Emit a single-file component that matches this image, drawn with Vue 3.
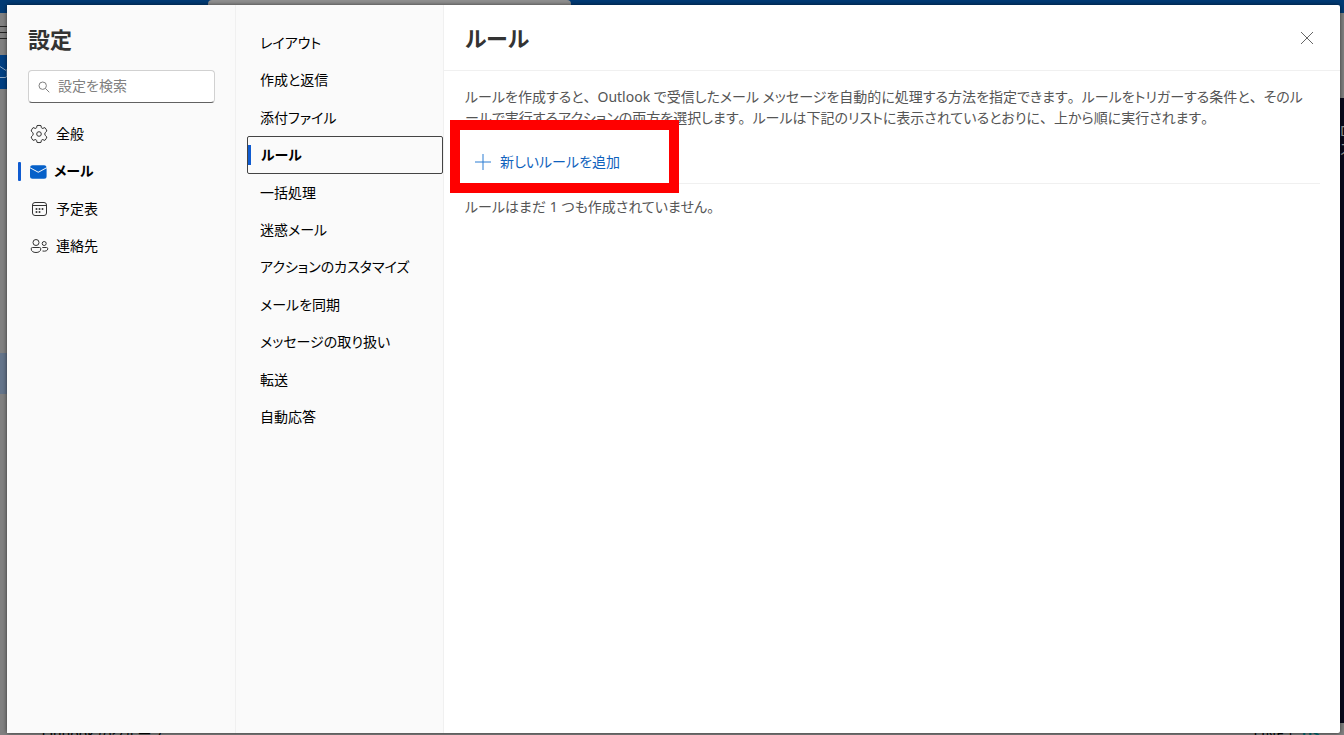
<script setup>
import { ref, computed } from 'vue'

const search = ref('')

// Catégories principales (colonne de gauche)
const categories = [
  { id: 'general', label: '全般' },
  { id: 'mail', label: 'メール' },
  { id: 'calendar', label: '予定表' },
  { id: 'people', label: '連絡先' },
]
const currentCategory = ref('mail')

// Sous-sections de la catégorie « メール »
const sections = [
  'レイアウト',
  '作成と返信',
  '添付ファイル',
  'ルール',
  '一括処理',
  '迷惑メール',
  'アクションのカスタマイズ',
  'メールを同期',
  'メッセージの取り扱い',
  '転送',
  '自動応答',
]
const currentSection = ref('ルール')

const description =
  'ルールを作成すると、Outlook で受信したメール メッセージを自動的に処理する方法を指定できます。ルールをトリガーする条件と、そのルールで実行するアクションの両方を選択します。ルールは下記のリストに表示されているとおりに、上から順に実行されます。'

// La ponctuation japonaise garde sa pleine chasse, le reste est proportionnel
const descriptionParts = computed(() =>
  description.split(/([、。])/).filter(Boolean).map((text) => ({ text, mark: /^[、。]$/.test(text) })),
)
</script>

<template>
  <div class="app">
    <!-- Boîte de réception assombrie derrière la fenêtre -->
    <div class="mailbox" aria-hidden="true">
      <div class="topbar"><div class="topbar-search"></div></div>
      <div class="mailbox-body">
        <div class="rail">
          <svg class="burger" width="7" height="13" viewBox="0 0 7 13" stroke="#222">
            <path d="M0 .5h7M0 6.500h7M0 12.500h7" />
          </svg>
          <div class="new-mail">
            <svg width="7" height="20" viewBox="0 0 7 20" fill="none" stroke="#8ba6c4">
              <path d="M0 4.500l6 4M0 15.500h5a2 2 0 0 0 2-2V7" />
            </svg>
          </div>
          <div class="rail-current"></div>
        </div>
        <div class="ad"><p>D<br />ス</p></div>
      </div>
      <div class="mailbox-foot">
        <span>Outlook のグループ</span>
        <span class="foot-ad">LINE上 <b>US</b></span>
      </div>
    </div>

    <div class="dialog" role="dialog" aria-labelledby="settings-title">
      <div class="categories">
        <h1 id="settings-title">設定</h1>
        <label class="search">
          <svg width="12" height="12" viewBox="0 0 12 12" fill="none" stroke="#808080">
            <circle cx="4.700" cy="4.700" r="3.700" />
            <path d="M7.500 7.500l3.800 3.800" />
          </svg>
          <input v-model="search" type="text" placeholder="設定を検索" aria-label="設定を検索" />
        </label>
        <nav class="category-list">
          <button
            v-for="cat in categories"
            :key="cat.id"
            type="button"
            class="category"
            :class="{ active: cat.id === currentCategory }"
            @click="currentCategory = cat.id"
          >
            <svg v-if="cat.id === 'general'" width="20" height="20" viewBox="0 0 20 20" fill="none" stroke="#333">
              <path
                d="M8 1.600Q10 1.200 12 1.600L12.400 3.600Q12.700 4.700 13.900 4.300L15.900 3.600Q17.300 5.100 17.900 7L16.400 8.400Q15 10 16.400 11.600L17.900 13Q17.300 14.900 15.900 16.400L13.900 15.700Q12.700 15.300 12.400 16.400L12 18.400Q10 18.800 8 18.400L7.600 16.400Q7.300 15.300 6.100 15.700L4.100 16.400Q2.700 14.900 2.100 13L3.600 11.600Q5 10 3.600 8.400L2.100 7Q2.700 5.100 4.100 3.600L6.100 4.300Q7.300 4.700 7.600 3.600Z"
                stroke-linejoin="round"
              />
              <circle cx="10" cy="10" r="2.300" />
            </svg>
            <svg v-else-if="cat.id === 'mail'" width="20" height="20" viewBox="0 0 20 20">
              <path
                fill="#0560c9"
                d="M2 7.300 10.300 11.800 18.600 7.300V15.200A2.500 2.500 0 0 1 16.100 17.700H4.500A2.500 2.500 0 0 1 2 15.200ZM4.500 4.200H16.100A2.500 2.500 0 0 1 18.600 6.200L10.300 10.700 2 6.200A2.500 2.500 0 0 1 4.500 4.200Z"
              />
            </svg>
            <svg v-else-if="cat.id === 'calendar'" width="20" height="20" viewBox="0 0 20 20" fill="none" stroke="#333">
              <rect x="3.500" y="3.500" width="14" height="13" rx="2.500" />
              <path d="M3.500 6.500h14" />
              <g fill="#333" stroke="none">
                <circle cx="7.500" cy="10" r="1" />
                <circle cx="10.500" cy="10" r="1" />
                <circle cx="13.500" cy="10" r="1" />
                <circle cx="7.500" cy="13" r="1" />
                <circle cx="10.500" cy="13" r="1" />
              </g>
            </svg>
            <svg v-else width="20" height="20" viewBox="0 0 20 20" fill="none" stroke="#333">
              <circle cx="7" cy="6.500" r="3" />
              <circle cx="15.200" cy="7.500" r="2" />
              <path
                d="M3.500 11.500h7a1.300 1.300 0 0 1 1.300 1.300C11.800 15.300 9.800 16.500 7 16.500S2.200 15.300 2.200 12.800A1.300 1.300 0 0 1 3.500 11.500ZM13.300 11.500h4.200a1.300 1.300 0 0 1 1.300 1.300c0 1.900-2.400 2.800-5.300 2.200"
              />
            </svg>
            <span>{{ cat.label }}</span>
          </button>
        </nav>
      </div>

      <nav class="sections">
        <div class="section-list">
          <button
            v-for="section in sections"
            :key="section"
            type="button"
            class="section"
            :class="{ active: section === currentSection }"
            @click="currentSection = section"
          >
            {{ section }}
          </button>
        </div>
      </nav>

      <main class="content">
        <header class="content-header">
          <h2>ルール</h2>
          <button type="button" class="close" aria-label="閉じる">
            <svg width="14" height="14" viewBox="0 0 14 14" fill="none" stroke="#666">
              <path d="M1 1l12 12M13 1L1 13" />
            </svg>
          </button>
        </header>
        <div class="content-body">
          <p class="description">
            <span v-for="(part, i) in descriptionParts" :key="i" :class="{ mark: part.mark }">{{ part.text }}</span>
          </p>
          <div class="toolbar">
            <button type="button" class="add-rule">
              <svg width="18" height="18" viewBox="0 0 18 18" fill="none" stroke="#2b7cd3">
                <path d="M9 1v16M1 9h16" />
              </svg>
              新しいルールを追加
            </button>
            <div class="highlight"></div>
          </div>
          <p class="empty">ルールはまだ 1 つも作成されていません。</p>
        </div>
      </main>
    </div>
  </div>
</template>

<style>
body {
  margin: 0;
  overflow: hidden;
}
</style>

<style scoped>
.app {
  position: relative;
  height: 100vh;
  overflow: hidden;
  font-family: 'Noto Sans', 'Noto Sans CJK JP', sans-serif;
  font-feature-settings: 'palt';
  font-size: 14px;
  line-height: 20px;
  color: #000;
}

h1,
h2,
p {
  margin: 0;
}

button {
  padding: 0;
  border: 0;
  background: none;
  color: inherit;
  font: inherit;
  font-feature-settings: inherit;
  text-align: left;
  cursor: pointer;
}

svg {
  display: block;
  flex: none;
}

/* Arrière-plan */
.mailbox {
  display: flex;
  flex-direction: column;
  height: 100%;
  background: #808080;
}

.topbar {
  height: 13px;
  padding-left: 208px;
  background: #003a74;
}

.topbar-search {
  width: 363px;
  height: 10px;
  border-radius: 4px;
  background: #909090;
}

.mailbox-body {
  flex: 1;
  display: flex;
  justify-content: space-between;
}

.rail {
  width: 7px;
  padding-top: 13px;
}

.new-mail {
  display: flex;
  align-items: center;
  height: 34px;
  margin-top: 16px;
  background: #003f82;
}

.rail-current {
  height: 41px;
  margin-top: 264px;
  background: #64748a;
}

.ad {
  width: 4px;
  margin-top: 85px;
  overflow: hidden;
  background: #09091c;
  color: #999;
  line-height: 18px;
}

.ad p {
  padding-top: 24px;
}

.mailbox-foot {
  display: flex;
  justify-content: space-between;
  height: 12px;
  padding: 0 24px 0 42px;
  line-height: 22px;
}

.foot-ad b {
  color: #006a70;
}

/* Fenêtre des paramètres */
.dialog {
  position: absolute;
  inset: 5px 4px 2px 7px;
  display: flex;
  border-radius: 2px;
  background: #fff;
  box-shadow: 0 0 4px rgba(0, 0, 0, 0.6);
}

.categories {
  box-sizing: border-box;
  width: 229px;
  padding: 20px 20px 0 11px;
  border-right: 1px solid #f0f0f0;
  background: #fafafa;
}

h1,
h2 {
  font-size: 22px;
  font-weight: 700;
  line-height: 28px;
  color: #333;
}

h1 {
  padding-left: 10px;
}

.search {
  box-sizing: border-box;
  display: flex;
  align-items: center;
  gap: 8px;
  height: 33px;
  margin: 17px 0 12px 10px;
  padding: 0 9px;
  border: 1px solid #d1d1d1;
  border-bottom-color: #616161;
  border-radius: 4px;
  background: #fff;
}

.search input {
  flex: 1;
  min-width: 0;
  height: 20px;
  padding: 0 0 2px;
  border: 0;
  outline: 0;
  background: none;
  font: inherit;
  color: inherit;
}

.search input::placeholder {
  color: #808080;
  opacity: 1;
}

.category-list {
  display: grid;
  grid-auto-rows: 1fr;
  height: 150px;
}

.category {
  display: flex;
  align-items: center;
  gap: 7px;
  padding-left: 11px;
}

.category.active {
  position: relative;
  gap: 6px;
  padding-left: 10px;
  font-weight: 700;
}

.category.active::before {
  content: '';
  position: absolute;
  top: 9px;
  bottom: 9px;
  left: 0;
  width: 3px;
  border-radius: 1px;
  background: #0f5bd0;
}

.sections {
  box-sizing: border-box;
  width: 208px;
  padding: 19px 0 0 11px;
  border-right: 1px solid #f0f0f0;
  background: #fafafa;
}

.section-list {
  display: grid;
  grid-auto-rows: 1fr;
  height: 412px;
}

.section {
  padding-left: 13px;
}

.section.active {
  position: relative;
  border: 1px solid #444;
  border-radius: 2px;
  font-weight: 700;
}

.section.active::before {
  content: '';
  position: absolute;
  top: 8px;
  bottom: 8px;
  left: 0;
  width: 3px;
  background: #0f5bd0;
}

.content {
  flex: 1;
  min-width: 0;
}

.content-header {
  box-sizing: border-box;
  display: flex;
  align-items: center;
  justify-content: space-between;
  height: 66px;
  padding: 0 26px 0 21px;
  border-bottom: 1px solid #f0f0f0;
}

.content-body {
  padding: 15px 20px 0 21px;
  color: #555;
}

.description {
  padding-right: 10px;
  line-height: 21px;
  line-break: anywhere;
}

.mark {
  font-feature-settings: normal;
}

.toolbar {
  position: relative;
  display: flex;
  padding: 24px 0 11px 9px;
  border-bottom: 1px solid #f0f0f0;
}

.add-rule {
  display: flex;
  align-items: center;
  gap: 8px;
  color: #0f62bd;
}

/* Cadre rouge autour du bouton d'ajout */
.highlight {
  box-sizing: border-box;
  position: absolute;
  top: -8px;
  left: -15px;
  width: 229px;
  height: 73px;
  border: 10px solid #f00;
  pointer-events: none;
}

.empty {
  padding-top: 13px;
}
</style>
